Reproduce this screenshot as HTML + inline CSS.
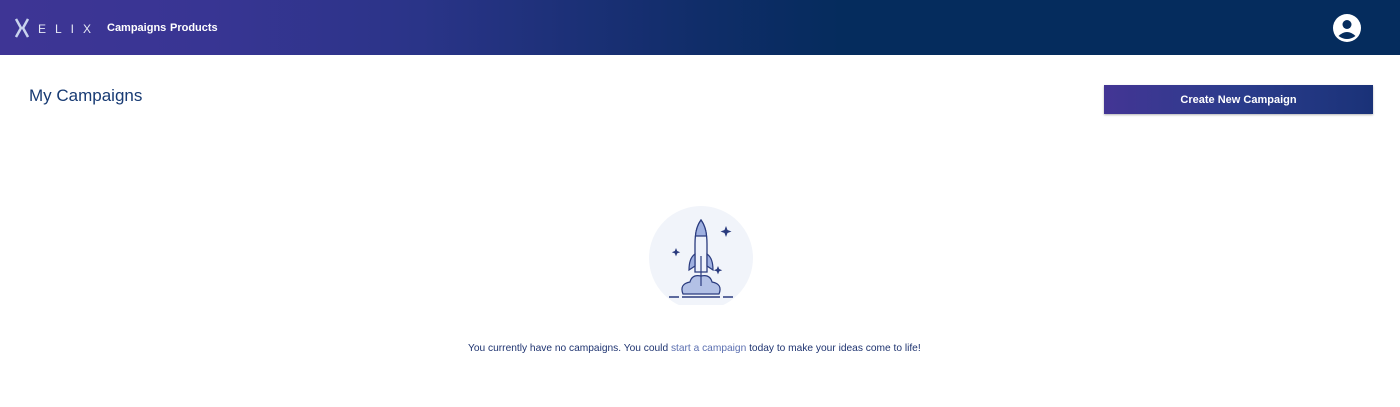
<!DOCTYPE html>
<html><head><style>
body{margin:0;width:1400px;height:407px;background:#fff;font-family:"Liberation Sans",sans-serif;position:relative;overflow:hidden}
.hdr{position:absolute;left:0;top:0;width:1400px;height:55px;background:linear-gradient(90deg,#3e3595 0%,#383593 15%,#2a3488 30%,#102d69 50%,#052c5d 60%,#052c5d 100%)}
.logo{position:absolute;left:38px;top:22px;color:#e6e9f5;font-size:12px;letter-spacing:9px}
.nav{position:absolute;top:22px;color:#fff;font-size:11px;font-weight:bold}
.ttl{position:absolute;left:29px;top:86px;font-size:17px;color:#173a73}
.btn{position:absolute;left:1104px;top:85px;width:269px;height:29px;background:linear-gradient(90deg,#433594,#2b3c8c 50%,#1a3278);color:#fff;font-size:11px;font-weight:bold;text-align:center;line-height:31px;box-shadow:0 1px 2px rgba(0,0,0,.3)}
.msg{position:absolute;left:468px;top:343px;font-size:10.2px;color:#1e3370;white-space:nowrap}
.msg span{color:#5b6fb0}
</style></head><body>
<div class="hdr">
<svg style="position:absolute;left:15px;top:18px" width="14" height="20" viewBox="0 0 14 20"><path d="M1 1 L6 10 L1 19 M13 1 L8 10 L13 19" stroke="#c9d3ee" stroke-width="2.5" fill="none"/></svg>
<div class="logo">ELIX</div>
<div class="nav" style="left:107px">Campaigns</div>
<div class="nav" style="left:170px">Products</div>
<svg style="position:absolute;left:1333px;top:14px" width="28" height="28" viewBox="0 0 28 28"><circle cx="14" cy="14" r="14" fill="#fff"/><circle cx="14" cy="10.5" r="4.5" fill="#052c5d"/><path d="M5.5 22 Q14 14 22.5 22 Q14 28 5.5 22Z" fill="#052c5d"/></svg>
</div>
<div class="ttl">My Campaigns</div>
<div class="btn">Create New Campaign</div>
<svg style="position:absolute;left:640px;top:200px" width="120" height="105" viewBox="-6 -4 120 105">
<circle cx="55" cy="54" r="52" fill="#f1f4fa"/>
<path d="M37 90 Q33 80 44 78 Q46 70 55 72 Q64 70 66 78 Q77 80 73 90Z" fill="#b3c1e6" stroke="#2a3b7e" stroke-width="1.2"/>
<line x1="23" y1="93" x2="33" y2="93" stroke="#2a3b7e" stroke-width="1.5"/><line x1="36" y1="93" x2="74" y2="93" stroke="#2a3b7e" stroke-width="1.5"/><line x1="77" y1="93" x2="87" y2="93" stroke="#2a3b7e" stroke-width="1.5"/>
<path d="M55 16 Q61 24 61 40 L61 68 L49 68 L49 40 Q49 24 55 16Z" fill="#eef2fb" stroke="#2a3b7e" stroke-width="1.3"/>
<path d="M55 16 Q60 23 60.5 32 L49.5 32 Q50 23 55 16Z" fill="#9fb0e0" stroke="#2a3b7e" stroke-width="1.2"/>
<path d="M49 50 Q43 54 43 66 L49 62Z M61 50 Q67 54 67 66 L61 62Z" fill="#9fb0e0" stroke="#2a3b7e" stroke-width="1.2"/>
<path d="M55 52 L55 82" stroke="#2a3b7e" stroke-width="1.2"/>
<path d="M80 22 l1.5 4 4 1.5 -4 1.5 -1.5 4 -1.5 -4 -4 -1.5 4 -1.5Z M30 44 l1.2 3 3 1.2 -3 1.2 -1.2 3 -1.2 -3 -3 -1.2 3 -1.2Z M72 62 l1.2 3 3 1.2 -3 1.2 -1.2 3 -1.2 -3 -3 -1.2 3 -1.2Z" fill="#2a3b7e"/>
</svg>
<div class="msg">You currently have no campaigns. You could <span>start a campaign</span> today to make your ideas come to life!</div>
</body></html>
